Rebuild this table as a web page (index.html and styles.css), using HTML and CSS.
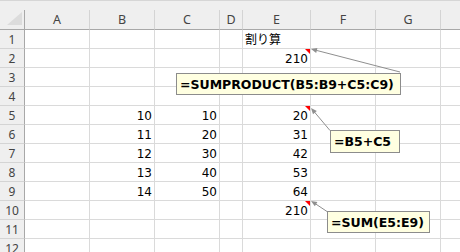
FILE: index.html
```html
<!DOCTYPE html>
<html lang="ja">
<head>
<meta charset="utf-8">
<link rel="stylesheet" href="styles.css">
</head>
<body>
<div class="sheet">
  <div class="topbar"></div>
  <div class="grid">
    <div class="corner"><svg class="corner-tri" width="25" height="20" viewBox="0 0 25 20"><polygon points="7,15 22,15 22,2" fill="#dcdcdc"/></svg></div>
    <div class="ch">A</div><div class="ch">B</div><div class="ch">C</div><div class="ch">D</div><div class="ch">E</div><div class="ch">F</div><div class="ch">G</div><div class="ch end"></div>

    <div class="rh">1</div><div class="c"></div><div class="c"></div><div class="c"></div><div class="c"></div><div class="c">割り算</div><div class="c"></div><div class="c"></div><div class="c end"></div>
    <div class="rh">2</div><div class="c"></div><div class="c"></div><div class="c"></div><div class="c"></div><div class="c n note-cell">210<span class="flag"></span></div><div class="c"></div><div class="c"></div><div class="c end"></div>
    <div class="rh">3</div><div class="c"></div><div class="c"></div><div class="c"></div><div class="c"></div><div class="c"></div><div class="c"></div><div class="c"></div><div class="c end"></div>
    <div class="rh">4</div><div class="c"></div><div class="c"></div><div class="c"></div><div class="c"></div><div class="c"></div><div class="c"></div><div class="c"></div><div class="c end"></div>
    <div class="rh">5</div><div class="c"></div><div class="c n">10</div><div class="c n">10</div><div class="c"></div><div class="c n note-cell">20<span class="flag"></span></div><div class="c"></div><div class="c"></div><div class="c end"></div>
    <div class="rh">6</div><div class="c"></div><div class="c n">11</div><div class="c n">20</div><div class="c"></div><div class="c n">31</div><div class="c"></div><div class="c"></div><div class="c end"></div>
    <div class="rh">7</div><div class="c"></div><div class="c n">12</div><div class="c n">30</div><div class="c"></div><div class="c n">42</div><div class="c"></div><div class="c"></div><div class="c end"></div>
    <div class="rh">8</div><div class="c"></div><div class="c n">13</div><div class="c n">40</div><div class="c"></div><div class="c n">53</div><div class="c"></div><div class="c"></div><div class="c end"></div>
    <div class="rh">9</div><div class="c"></div><div class="c n">14</div><div class="c n">50</div><div class="c"></div><div class="c n">64</div><div class="c"></div><div class="c"></div><div class="c end"></div>
    <div class="rh">10</div><div class="c"></div><div class="c"></div><div class="c"></div><div class="c"></div><div class="c n note-cell">210<span class="flag"></span></div><div class="c"></div><div class="c"></div><div class="c end"></div>
    <div class="rh">11</div><div class="c"></div><div class="c"></div><div class="c"></div><div class="c"></div><div class="c"></div><div class="c"></div><div class="c"></div><div class="c end"></div>
    <div class="rh">12</div><div class="c"></div><div class="c"></div><div class="c"></div><div class="c"></div><div class="c"></div><div class="c"></div><div class="c"></div><div class="c end"></div>
  </div>

  <svg class="arrows" width="460" height="252" viewBox="0 0 460 252">
    <g stroke="#8f8f8f" stroke-width="1" fill="none">
      <line x1="400" y1="72" x2="315" y2="50"/>
      <line x1="330" y1="130.5" x2="314" y2="111.5"/>
      <line x1="327" y1="211.5" x2="315" y2="203.5"/>
    </g>
    <g fill="#8f8f8f">
      <polygon points="311,49 317.4,48.1 316.2,52.9"/>
      <polygon points="311,108 316.8,110.9 313,114.2"/>
      <polygon points="311,201 317.4,202.1 314.8,206.3"/>
    </g>
  </svg>

  <div class="note n1">=SUMPRODUCT(B5:B9+C5:C9)</div>
  <div class="note n2">=B5+C5</div>
  <div class="note n3">=SUM(E5:E9)</div>
</div>
</body>
</html>
```

FILE: styles.css
```css
html, body {
  margin: 0;
  padding: 0;
  background: #ffffff;
}

.sheet {
  position: relative;
  width: 460px;
  height: 252px;
  overflow: hidden;
  background: #ffffff;
}

.topbar {
  height: 10px;
  box-sizing: border-box;
  background: #efefef;
  border-top: 1px solid #d6d6d6;
}

.grid {
  display: grid;
  grid-template-columns: 25px 65px 65px 65px 23px 68px 65px 65px 1fr;
  grid-template-rows: 20px repeat(12, 19px);
  font-family: "DejaVu Sans", "Noto Sans CJK JP", sans-serif;
  font-size: 12px;
  color: #000;
}

.corner {
  position: relative;
  background: #efefef;
  box-sizing: border-box;
  border-right: 1px solid #a8a8a8;
  border-bottom: 1px solid #a8a8a8;
}

.corner-tri {
  display: block;
}

.ch {
  box-sizing: border-box;
  background: #efefef;
  border-right: 1px solid #d4d4d4;
  border-bottom: 1px solid #a8a8a8;
  font-family: "Noto Sans", sans-serif;
  font-size: 12.5px;
  color: #444444;
  text-align: center;
  line-height: 19px;
}

.ch.end {
  border-right: none;
}

.rh {
  box-sizing: border-box;
  background: #efefef;
  border-right: 1px solid #a8a8a8;
  border-bottom: 1px solid #d4d4d4;
  font-family: "Noto Sans", sans-serif;
  font-size: 12px;
  color: #444444;
  text-align: center;
  line-height: 19px;
}

.c {
  position: relative;
  box-sizing: border-box;
  border-right: 1px solid #dadada;
  border-bottom: 1px solid #dadada;
  padding: 1px 2px 0 2px;
  line-height: 18px;
  white-space: nowrap;
}

.c.end {
  border-right: none;
}

.c.n {
  text-align: right;
}

.flag {
  position: absolute;
  top: 0;
  right: 0;
  width: 0;
  height: 0;
  border-left: 5px solid transparent;
  border-top: 5px solid #ff0000;
}

.arrows {
  position: absolute;
  left: 0;
  top: 0;
  pointer-events: none;
}

.note {
  position: absolute;
  box-sizing: border-box;
  display: flex;
  align-items: center;
  padding-left: 3px;
  background: #ffffe1;
  border: 1px solid #8c8c8c;
  font-family: "DejaVu Sans", sans-serif;
  font-weight: bold;
  font-size: 12.5px;
  color: #000;
  white-space: nowrap;
}

.n1 {
  left: 176px;
  top: 73px;
  width: 225px;
  height: 22px;
}

.n2 {
  left: 330px;
  top: 130px;
  width: 70px;
  height: 23px;
}

.n3 {
  left: 327px;
  top: 211px;
  width: 103px;
  height: 22px;
}
```
